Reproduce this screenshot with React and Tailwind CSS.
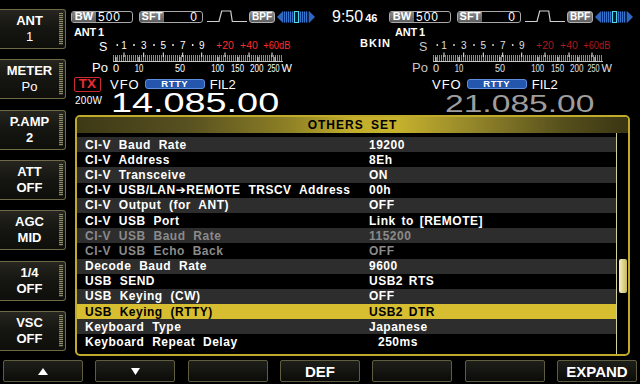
import React from "react";

const FONT = "font-['Liberation_Sans','DejaVu_Sans',sans-serif]";

function SideBtn({ top, bottom, thin }) {
  return (
    <div className="flex h-[40px] w-[66px] rounded-r-[3px] border border-l-0 border-[#6f6b48] bg-gradient-to-b from-[#26251f] via-[#151511] to-[#0e0e0b]">
      <div className="flex flex-1 flex-col items-center justify-center text-white leading-[16px]">
        <span className="text-[13px] font-bold">{top}</span>
        <span className={thin ? "text-[13px] font-normal" : "text-[13px] font-bold"}>{bottom}</span>
      </div>
      <div className="my-[3px] mr-[2px] w-[4px] bg-[repeating-linear-gradient(to_bottom,#8d8a66_0px,#8d8a66_1px,#2d2c22_1px,#2d2c22_2px)]" />
    </div>
  );
}

function BottomBtn({ children }) {
  return (
    <div className="flex h-[22px] w-[80px] items-center justify-center rounded-[2px] border border-[#5f5d40] bg-gradient-to-b from-[#1f1f1a] to-[#0b0b09] text-[15px] font-bold leading-none text-white">
      {children}
    </div>
  );
}

function Arrows() {
  const stripes = [];
  for (let x = 7; x < 31; x += 2) stripes.push(x);
  return (
    <svg className="ml-[2px] block" width="38" height="12" viewBox="0 0 38 12">
      <polygon points="0,6 6,0 6,12" fill="#2f66bf" />
      <rect x="6" y="0.5" width="26" height="11" fill="#0e2452" />
      {stripes.map((x) => (
        <rect key={x} x={x} y="0.5" width="1" height="11" fill="#3b73cc" />
      ))}
      <rect x="17.5" y="0.5" width="4" height="11" fill="#0a1a30" stroke="#4fd8e8" strokeWidth="1" />
      <polygon points="32,0 38,6 32,12" fill="#2f66bf" />
    </svg>
  );
}

function StatusRow({ main }) {
  return (
    <div className={main ? "mt-[10px] flex h-[13px] items-center pl-[1px]" : "mt-[10px] flex h-[13px] items-center"}>
      <div className="flex h-[12px] w-[62px] items-stretch overflow-hidden rounded-[3px] border border-[#a8a8a8]">
        <div className="flex w-[24px] items-center justify-center bg-gradient-to-b from-[#8a8a8a] to-[#5e5e5e] text-[11px] font-bold leading-none text-white">
          BW
        </div>
        <div className="flex items-center pl-[2px] text-[12px] leading-none tracking-[1px] text-white">500</div>
      </div>
      <div className="ml-[6px] flex h-[12px] w-[64px] items-stretch overflow-hidden rounded-[3px] border border-[#a8a8a8]">
        <div className="flex w-[24px] items-center justify-center bg-gradient-to-b from-[#8a8a8a] to-[#5e5e5e] text-[11px] font-bold leading-none text-white">
          SFT
        </div>
        <div className="flex flex-1 items-center justify-end pr-[5px] text-[12px] leading-none text-white">0</div>
      </div>
      <svg className="ml-[2px] block" width="42" height="13" viewBox="0 0 42 13">
        <polyline
          points="2,11.5 14,11.5 16.7,1 25.7,1 27.3,11.5 42,11.5"
          fill="none"
          stroke="#d0d0d0"
          strokeWidth="1.2"
        />
      </svg>
      <div className="ml-[2px] flex h-[12px] w-[26px] items-center justify-center rounded-[3px] border border-[#b0b0b0] bg-gradient-to-b from-[#8c8c8c] to-[#5f5f5f] text-[10px] font-bold leading-none text-white">
        BPF
      </div>
      <Arrows />
      {main && (
        <div className="ml-[17px] flex items-baseline text-white">
          <span className="text-[16px] leading-none">9:50</span>
          <span className="ml-[2px] text-[11px] font-bold leading-none">46</span>
        </div>
      )}
    </div>
  );
}

function Meter({ dim }) {
  const red = dim ? "#b0181c" : "#ff2b2b";
  const wht = dim ? "#e0e0e0" : "#ffffff";
  const lab = dim ? "#c8c8c8" : "#ffffff";
  const minor = [];
  for (let x = 25; x <= 194; x += 2) minor.push(x);
  const dots = [29.3, 46, 66, 85, 104.7];
  const sNums = [
    ["1", 36],
    ["3", 55.7],
    ["5", 75.3],
    ["7", 94.7],
    ["9", 113.7],
  ];
  const sMajor = [36, 55.7, 75.3, 94.7, 113.7, 137, 161, 184];
  const poMajor = [28, 51, 92, 130, 150, 170, 187];
  return (
    <svg width="215" height="38" viewBox="0 0 215 38" className="block" fontFamily="'Liberation Sans', sans-serif">
      <text x="11" y="13" fontSize="12.5" fill={lab}>
        S
      </text>
      {dots.map((x) => (
        <circle key={x} cx={x} cy="7" r="0.9" fill={wht} />
      ))}
      {sNums.map(([t, x]) => (
        <text key={t} x={x} y="10.5" fontSize="10" textAnchor="middle" fill={wht}>
          {t}
        </text>
      ))}
      <text x="137" y="10.5" fontSize="10.5" textAnchor="middle" fill={red}>
        +20
      </text>
      <text x="161" y="10.5" fontSize="10.5" textAnchor="middle" fill={red}>
        +40
      </text>
      <text x="175.3" y="10.5" fontSize="10.5" fill={red} textLength="27" lengthAdjust="spacingAndGlyphs">
        +60dB
      </text>
      {minor.map((x) => (
        <line key={x} x1={x + 0.5} x2={x + 0.5} y1="17" y2="23" stroke="#8c8c8c" strokeWidth="1" />
      ))}
      <line x1="25" x2="195" y1="23.5" y2="23.5" stroke="#c4c4c4" strokeWidth="1" />
      {sMajor.map((x) => (
        <line key={"s" + x} x1={x} x2={x} y1="14.5" y2="19" stroke="#f0f0f0" strokeWidth="1" />
      ))}
      {poMajor.map((x) => (
        <line key={"p" + x} x1={x} x2={x} y1="19" y2="24" stroke="#f0f0f0" strokeWidth="1" />
      ))}
      <text x="4" y="34" fontSize="13" fill={lab}>
        Po
      </text>
      <text x="28" y="34" fontSize="11" textAnchor="middle" fill={wht}>
        0
      </text>
      <text x="46.7" y="34" fontSize="11" fill={wht} textLength="8.5" lengthAdjust="spacingAndGlyphs">
        10
      </text>
      <text x="87" y="34" fontSize="11" fill={wht} textLength="10" lengthAdjust="spacingAndGlyphs">
        50
      </text>
      <text x="123.2" y="34" fontSize="11" fill={wht} textLength="13" lengthAdjust="spacingAndGlyphs">
        100
      </text>
      <text x="143" y="34" fontSize="11" fill={wht} textLength="13" lengthAdjust="spacingAndGlyphs">
        150
      </text>
      <text x="162" y="34" fontSize="11" fill={wht} textLength="13.5" lengthAdjust="spacingAndGlyphs">
        200
      </text>
      <text x="179.5" y="34" fontSize="11" fill={wht} textLength="12" lengthAdjust="spacingAndGlyphs">
        250
      </text>
      <text x="193.5" y="34" fontSize="11" fill={wht}>
        W
      </text>
    </svg>
  );
}

function Side({ main }) {
  return (
    <div className={main ? "w-[319px] shrink-0" : "flex-1"}>
      <StatusRow main={main} />
      <div className="flex">
        <div>
          <div
            className={
              main
                ? "h-[15px] pl-[4px] pt-[4px] text-[11px] font-bold leading-[11px] tracking-[-0.2px] text-white"
                : "h-[15px] pl-[6px] pt-[4px] text-[11px] font-bold leading-[11px] tracking-[-0.2px] text-white"
            }
          >
            ANT<span className="ml-[2px]">1</span>
          </div>
          <div className={main ? "pl-[18px]" : "pl-[19px]"}>
            <Meter dim={!main} />
          </div>
        </div>
        {main && (
          <div className="ml-[57px] mt-[15px] text-[11px] font-bold leading-[11px] tracking-[1px] text-white">BKIN</div>
        )}
      </div>
      <div className="flex h-[16px] items-center">
        <div
          className={
            main
              ? "ml-[4px] flex h-[15px] w-[27px] items-center justify-center rounded-[2px] border-[1.5px] border-[#cc2a2e] text-[13.5px] font-bold leading-none text-[#ee2b30]"
              : "invisible ml-[4px] flex h-[15px] w-[27px] items-center justify-center rounded-[2px] border-[1.5px] border-[#cc2a2e] text-[13.5px] font-bold leading-none text-[#ee2b30]"
          }
        >
          TX
        </div>
        <span className={main ? "ml-[9px] text-[13px] leading-none tracking-[1px] text-white" : "ml-[12px] text-[13px] leading-none tracking-[1px] text-white"}>
          VFO
        </span>
        <div className="ml-[5px] flex h-[10px] w-[60px] items-center justify-center rounded-[3px] border border-[#5d8ee0] bg-[#2556ae] text-[9.5px] font-bold leading-none tracking-[0.5px] text-white">
          RTTY
        </div>
        <span className="ml-[5px] text-[13px] leading-none text-white">FIL2</span>
      </div>
      <div className="flex h-[23px]">
        {main ? (
          <div className="w-[41px] shrink-0 pl-[5px] pt-[4px] text-[10px] leading-[10px] tracking-[0.3px] text-white">200W</div>
        ) : (
          <div className="w-[56px] shrink-0" />
        )}
        <div
          className={
            main
              ? "origin-left whitespace-nowrap text-[27px] leading-[23px] text-white [transform:scaleX(1.4)]"
              : "origin-left whitespace-nowrap text-[24px] leading-[23px] text-[#9d9d9d] [transform:scaleX(1.4)]"
          }
        >
          {main ? "14.085.00" : "21.085.00"}
        </div>
      </div>
    </div>
  );
}

const ROWS = [
  ["CI-V Baud Rate", "19200"],
  ["CI-V Address", "8Eh"],
  ["CI-V Transceive", "ON"],
  ["CI-V USB/LAN➔REMOTE TRSCV Address", "00h"],
  ["CI-V Output (for ANT)", "OFF"],
  ["CI-V USB Port", "Link to [REMOTE]"],
  ["CI-V USB Baud Rate", "115200", "dim"],
  ["CI-V USB Echo Back", "OFF", "dim"],
  ["Decode Baud Rate", "9600"],
  ["USB SEND", "USB2 RTS"],
  ["USB Keying (CW)", "OFF"],
  ["USB Keying (RTTY)", "USB2 DTR", "sel"],
  ["Keyboard Type", "Japanese"],
  ["Keyboard Repeat Delay", "250ms", "indent"],
];

function Row({ label, value, i, flag }) {
  const bg = flag === "sel" ? "bg-[#d6be30]" : i % 2 === 0 ? "bg-[#2d2d2d]" : "bg-black";
  const color = flag === "sel" ? "text-black" : flag === "dim" ? "text-[#8a8a8a]" : "text-white";
  return (
    <div className={`flex h-[15.2px] items-center text-[12px] font-bold leading-none tracking-[0.5px] [word-spacing:4px] ${bg} ${color}`}>
      <div className="w-[292px] shrink-0 whitespace-nowrap pl-[8px]">{label}</div>
      <div className={flag === "indent" ? "whitespace-nowrap pl-[9px] [word-spacing:2px]" : "whitespace-nowrap [word-spacing:2px]"}>{value}</div>
    </div>
  );
}

function Panel() {
  return (
    <div className="ml-[9px] flex h-[241px] w-[555px] flex-col overflow-hidden rounded-[5px] border-2 border-[#c0aa2c] bg-black">
      <div className="flex h-[16px] shrink-0 items-center justify-center bg-[linear-gradient(to_right,#3d3915_0%,#575020_20%,#8c7f25_38%,#c2ae2c_50%,#c6b22d_58%,#93852a_72%,#56501c_88%,#3a3512_100%)] text-[12px] font-bold leading-none tracking-[1px] text-black [word-spacing:3px]">
        OTHERS SET
      </div>
      <div className="flex flex-1">
        <div className="w-[539px] shrink-0 pt-[4px]">
          {ROWS.map(([l, v, f], i) => (
            <Row key={i} label={l} value={v} i={i} flag={f} />
          ))}
        </div>
        <div className="flex-1 border-l border-[#d6cf98]">
          <div className="ml-[2px] mt-[126px] h-[34px] w-[8px] rounded-[2px] bg-gradient-to-r from-[#f6f0c0] to-[#c9b85c]" />
        </div>
      </div>
    </div>
  );
}

export default function App() {
  return (
    <div className={`h-[384px] w-[640px] overflow-hidden bg-black ${FONT}`}>
      <div className="flex h-[356px]">
        <div className="flex w-[66px] shrink-0 flex-col gap-[10.33px] pt-[9px]">
          <SideBtn top="ANT" bottom="1" thin />
          <SideBtn top="METER" bottom="Po" thin />
          <SideBtn top="P.AMP" bottom="2" />
          <SideBtn top="ATT" bottom="OFF" />
          <SideBtn top="AGC" bottom="MID" />
          <SideBtn top="1/4" bottom="OFF" />
          <SideBtn top="VSC" bottom="OFF" />
        </div>
        <div className="flex flex-1 flex-col">
          <div className="flex h-[115px] shrink-0 pl-[4px]">
            <Side main />
            <Side />
          </div>
          <Panel />
        </div>
      </div>
      <div className="flex justify-between px-[3px] pt-[4px]">
        <BottomBtn>
          <svg width="10" height="7" viewBox="0 0 10 7" className="block">
            <polygon points="5,0 10,7 0,7" fill="#ffffff" />
          </svg>
        </BottomBtn>
        <BottomBtn>
          <svg width="9" height="7" viewBox="0 0 9 7" className="block">
            <polygon points="0,0 9,0 4.5,7" fill="#ffffff" />
          </svg>
        </BottomBtn>
        <BottomBtn />
        <BottomBtn>DEF</BottomBtn>
        <BottomBtn />
        <BottomBtn />
        <BottomBtn>EXPAND</BottomBtn>
      </div>
    </div>
  );
}
